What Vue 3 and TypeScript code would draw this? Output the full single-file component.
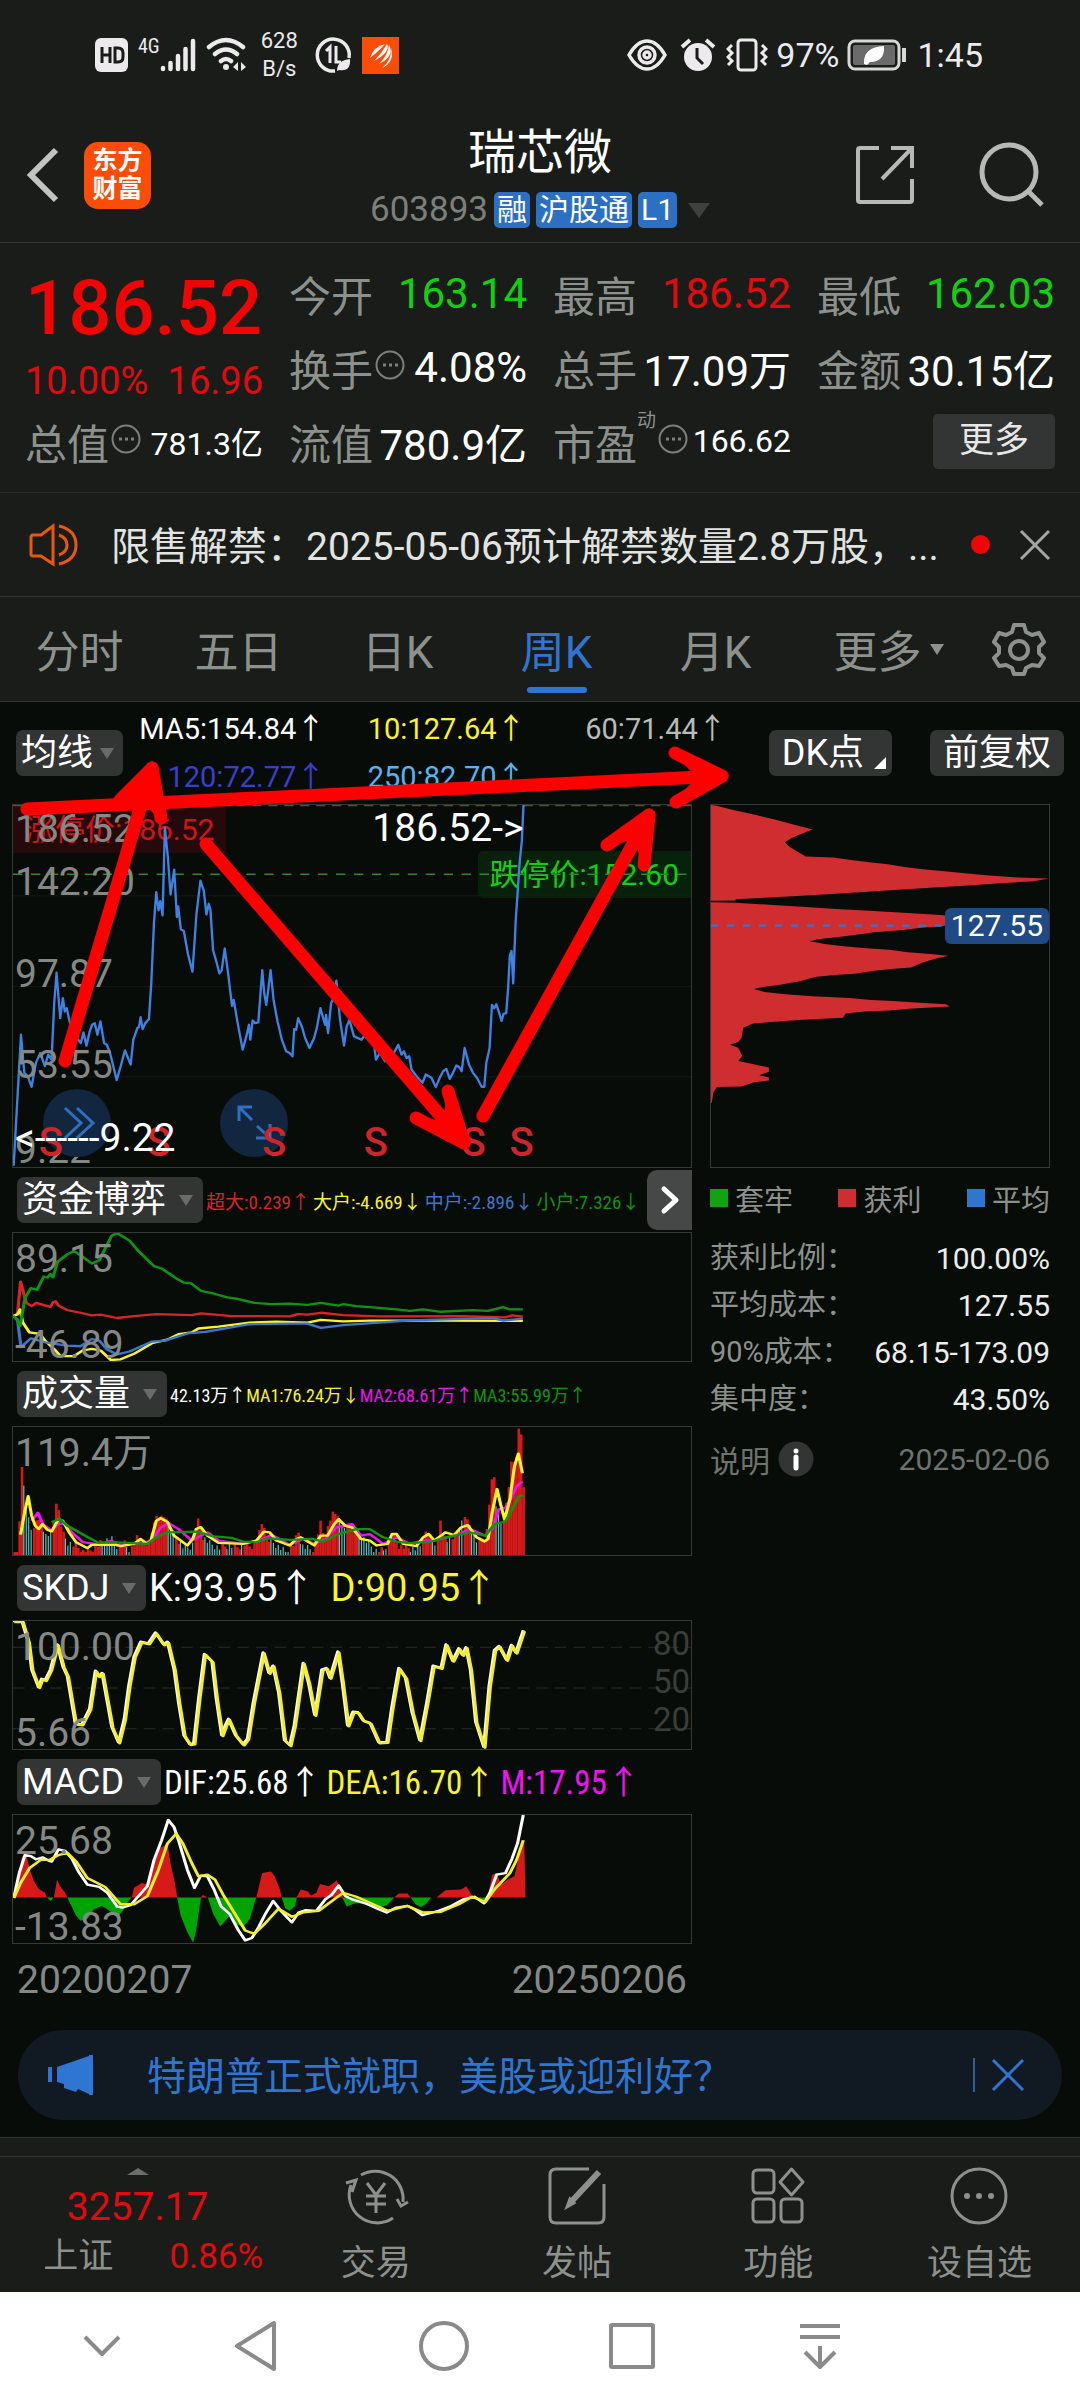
<script setup lang="ts">
import { ref } from 'vue'

type Tone = 'up' | 'down' | 'plain'
interface Reading { text: string; dir: '↑' | '↓'; color: string }

const tabs = ['分时', '五日', '日K', '周K', '月K']
const activeTab = ref('周K')

const averages: Reading[] = [
  { text: 'MA5:154.84', dir: '↑', color: '#ffffff' },
  { text: '10:127.64', dir: '↑', color: '#fbf32c' },
  { text: '60:71.44', dir: '↑', color: '#b9bcb9' },
  { text: '120:72.77', dir: '↑', color: '#3a3fc8' },
  { text: '250:82.70', dir: '↑', color: '#58b4ee' },
]

const fund: Reading[] = [
  { text: '超大:0.239', dir: '↑', color: '#d82424' },
  { text: '大户:-4.669', dir: '↓', color: '#fbf32c' },
  { text: '中户:-2.896', dir: '↓', color: '#3b78cc' },
  { text: '小户:7.326', dir: '↓', color: '#119311' },
]
const volume: Reading[] = [
  { text: '42.13万', dir: '↑', color: '#ffffff' },
  { text: 'MA1:76.24万', dir: '↓', color: '#fbf32c' },
  { text: 'MA2:68.61万', dir: '↑', color: '#f012f0' },
  { text: 'MA3:55.99万', dir: '↑', color: '#119311' },
]
const skdj: Reading[] = [
  { text: 'K:93.95', dir: '↑', color: '#ffffff' },
  { text: 'D:90.95', dir: '↑', color: '#fbf32c' },
]
const macd: Reading[] = [
  { text: 'DIF:25.68', dir: '↑', color: '#ffffff' },
  { text: 'DEA:16.70', dir: '↑', color: '#fbf32c' },
  { text: 'M:17.95', dir: '↑', color: '#f012f0' },
]

const costs = [
  { name: '获利比例：', value: '100.00%' },
  { name: '平均成本：', value: '127.55' },
  { name: '90%成本：', value: '68.15-173.09' },
  { name: '集中度：', value: '43.50%' },
]
const legend = [
  { name: '套牢', color: '#10a510' },
  { name: '获利', color: '#cf2d2f' },
  { name: '平均', color: '#2f76d2' },
]

const sellMarks = [38, 146, 262, 364, 462, 510].map((x) => (x / 680) * 100)
const tone: Record<Tone, string> = { up: 'red', down: 'green', plain: 'white' }

const priceLine =
  '38,1130 48,950 60,735 70,850 80,860 92,892 105,820 118,790 132,830 142,795 152,810 160,640 167,548 178,685 186,625 192,665 198,655 205,690 215,730 228,745 240,760 248,728 257,768 266,728 274,705 282,700 290,735 299,695 310,760 318,765 328,790 348,872 360,830 368,800 373,782 390,825 398,750 410,715 415,712 420,682 426,718 434,700 445,688 452,580 460,400 467,305 474,360 479,332 486,375 493,110 502,200 510,312 521,237 529,380 533,348 541,417 550,422 562,490 576,545 588,370 600,270 610,300 618,372 625,340 630,358 638,480 648,515 657,550 664,540 673,475 682,540 695,648 700,630 712,700 727,780 738,740 746,705 750,750 757,692 764,700 774,698 780,620 786,540 792,610 798,645 804,600 811,540 820,630 832,695 845,750 858,785 868,790 877,800 882,718 888,720 894,685 905,710 915,745 928,775 942,745 950,715 961,655 968,680 975,705 978,675 984,730 993,640 1000,625 1009,572 1020,690 1032,768 1040,710 1048,690 1062,740 1085,750 1095,735 1120,745 1128,810 1140,790 1155,815 1185,785 1195,765 1205,795 1212,785 1220,805 1228,800 1235,840 1250,860 1268,880 1278,855 1295,865 1308,893 1320,865 1330,845 1340,838 1350,868 1360,850 1370,828 1378,832 1386,845 1395,775 1408,825 1420,850 1432,865 1446,892 1454,892 1460,820 1470,775 1477,645 1484,655 1490,643 1496,660 1506,693 1512,672 1520,670 1526,590 1531,495 1536,482 1541,580 1548,400 1560,220 1567,150 1572,42'

const chipShape =
  '63,313 80,315 130,328 205,345 255,357 305,370 368,387 340,398 310,410 285,425 300,440 325,455 348,468 430,471 490,480 540,486 595,492 645,500 700,507 765,513 835,520 900,526 985,532 1080,535 1032,543 932,549 835,556 735,562 635,568 535,575 437,581 337,587 237,592 137,597 137,601 63,602 63,606 137,608 237,614 337,620 440,627 540,632 642,638 740,644 850,652 890,657 830,668 760,678 690,684 640,690 555,697 495,705 440,712 385,718 360,724 405,732 455,738 520,744 600,750 655,757 715,762 778,768 740,776 700,788 665,803 612,807 555,813 495,822 435,826 375,832 330,845 270,855 220,862 192,868 225,877 285,884 368,890 480,895 545,901 610,904 705,910 770,914 782,921 668,927 600,933 525,936 468,942 460,955 340,961 255,967 190,972 160,985 155,1015 145,1028 120,1036 145,1045 157,1070 145,1085 195,1096 237,1105 237,1118 208,1128 237,1135 237,1144 190,1150 155,1162 80,1164 70,1180 65,1212 63,1212'

const fundLines = [
  { color: '#d82424', points: '28,470 38,465 45,365 58,430 70,440 80,430 112,442 118,428 124,425 130,438 150,452 180,460 205,468 225,466 262,476 300,470 350,464 430,467 450,462 520,470 650,471 668,464 690,466 720,460 770,467 850,471 1040,470 1135,474 1150,468 1174,472' },
  { color: '#fbf32c', points: '28,470 38,465 44,450 50,490 65,520 88,524 100,545 120,570 135,592 165,592 185,575 205,570 225,575 248,604 270,602 300,585 340,553 375,542 400,525 430,520 445,508 490,502 560,490 620,487 690,490 720,482 770,486 830,484 950,484 1174,485' },
  { color: '#3b78cc', points: '28,470 38,480 46,565 68,538 100,550 150,560 180,562 205,540 222,545 240,572 262,587 290,578 340,548 370,545 420,523 460,518 560,495 650,493 690,493 720,506 770,498 850,490 920,483 1080,477 1110,477 1130,484 1174,478' },
  { color: '#119311', points: '28,470 36,480 44,500 55,415 68,385 82,390 97,350 106,352 112,342 118,352 128,305 150,282 165,272 180,285 205,310 222,300 235,265 250,225 262,217 290,240 310,272 345,318 362,325 395,355 412,368 428,370 450,393 480,402 510,413 530,417 570,430 610,434 650,432 690,436 720,430 760,438 770,434 800,440 850,445 890,450 920,454 950,450 990,457 1060,452 1095,454 1130,443 1145,450 1174,450' },
]

// Weekly volume, given as the profile of bar tops and sampled once per week.
const volumeProfile: [number, number][] = [
  [30, 550], [38, 535], [44, 275], [50, 330], [56, 400], [62, 440], [70, 490], [80, 440], [90, 470], [100, 490], [115, 480], [121, 388], [128, 420], [135, 480], [150, 510], [170, 525], [190, 545], [210, 525], [230, 505], [248, 500], [260, 520], [275, 512], [290, 540], [300, 498], [315, 500], [330, 520], [345, 438], [370, 440], [380, 470], [395, 500], [412, 530], [430, 520], [440, 440], [450, 490], [470, 515], [490, 528], [510, 520], [530, 525], [545, 515], [560, 525], [575, 500], [587, 450], [595, 500], [610, 510], [640, 540], [655, 520], [668, 478], [675, 520], [700, 535], [717, 452], [725, 500], [744, 427], [758, 435], [770, 480], [780, 450], [800, 480], [820, 505], [840, 535], [860, 535], [878, 485], [890, 520], [920, 530], [940, 530], [955, 475], [970, 510], [980, 510], [986, 448], [992, 500], [1010, 500], [1028, 480], [1040, 435], [1055, 470], [1070, 510], [1090, 485], [1097, 385], [1105, 285], [1112, 400], [1125, 465], [1138, 370], [1148, 240], [1154, 300], [1162, 170], [1168, 185], [1175, 417], [1181, 417],
]
const fallingWeeks: [number, number][] = [
  [49, 68], [92, 112], [140, 160], [225, 264], [280, 292], [372, 388], [400, 436], [455, 492], [505, 520], [540, 546], [605, 650], [672, 700], [755, 772], [800, 845], [855, 866], [915, 945], [968, 980], [1000, 1012], [1028, 1036], [1052, 1072], [1112, 1128],
]
const volumeBars = Array.from({ length: 209 }, (_, i) => {
  const x = 29 + i * 5.5
  const k = Math.max(1, volumeProfile.findIndex(([px]) => px > x))
  const [x0, y0] = volumeProfile[k - 1]
  const [x1, y1] = volumeProfile[k]
  const y = y0 + ((y1 - y0) * Math.max(0, x - x0)) / (x1 - x0)
  const falling = fallingWeeks.some(([a, b]) => x > a && x < b)
  const dip = ((i * 7) % 5) * (y > 480 ? 5 : 2)
  return { x, y: Math.min(y + dip, 550), falling }
})
const volumeLines = [
  { color: '#f012f0', points: '70,455 84,430 95,465 115,485 130,463 145,465 160,490 185,520 220,527 250,515 262,530 320,522 340,515 360,475 378,462 400,480 430,515 465,490 490,515 545,525 580,515 610,498 650,528 680,510 705,525 730,510 755,475 790,465 810,500 830,495 860,525 890,505 920,525 950,515 975,515 1020,500 1055,480 1090,500 1105,480 1120,420 1135,415 1150,380 1160,350 1173,335' },
  { color: '#fbf32c', points: '45,497 54,430 62,380 70,440 78,470 86,480 94,465 105,482 115,487 130,450 140,455 155,492 170,520 195,538 205,528 260,528 270,532 300,525 315,510 328,525 338,515 350,455 360,447 375,458 390,500 420,530 432,510 440,480 450,474 465,500 490,522 545,525 575,515 592,488 605,490 620,515 650,530 665,510 675,505 705,530 720,500 735,500 750,465 760,450 775,470 790,475 810,510 830,515 845,530 870,525 880,495 890,495 905,525 935,532 950,505 962,495 975,515 985,505 1000,490 1020,498 1035,475 1050,468 1070,505 1088,518 1096,510 1105,430 1116,358 1125,410 1133,450 1145,390 1155,290 1164,250 1173,310' },
  { color: '#119311', points: '115,460 132,448 150,470 190,500 220,522 250,520 330,525 350,505 375,490 440,488 480,502 520,507 545,518 575,520 600,508 650,513 700,510 725,518 760,495 800,480 830,480 860,505 890,518 920,523 970,518 1000,505 1055,490 1090,500 1110,465 1135,457 1150,420 1165,380 1174,378' },
]

const skdjLine =
  '28,32 48,32 62,95 70,180 85,233 92,208 100,212 112,180 127,103 140,170 150,200 168,345 182,347 200,300 213,183 220,200 228,190 240,280 250,355 265,402 278,330 288,230 300,140 315,95 332,100 348,67 366,103 375,95 390,180 400,280 412,380 425,407 434,405 445,270 458,132 475,155 485,270 497,380 505,350 512,330 528,380 545,408 555,390 568,280 590,128 603,190 612,168 625,250 638,395 650,410 660,350 680,160 692,220 706,318 722,180 732,175 740,205 758,125 768,220 780,350 792,308 803,310 815,335 830,342 850,402 868,400 880,290 895,175 910,205 925,310 942,395 958,280 972,168 990,175 1001,103 1016,153 1030,115 1038,135 1046,112 1056,180 1068,340 1086,415 1098,230 1110,120 1120,108 1137,150 1148,105 1158,128 1175,60'

const macdRed =
  '30,864 40,800 48,740 58,735 66,780 75,815 85,838 100,850 104,864 120,864 127,810 134,830 145,850 150,864 295,864 300,835 318,820 330,825 345,760 352,715 362,712 375,700 382,760 392,820 397,864 450,864 455,857 465,864 575,864 588,790 608,785 616,800 628,840 632,864 665,864 675,840 690,845 698,858 710,850 718,823 738,830 756,812 765,845 770,864 885,864 895,852 915,852 922,864 980,864 1000,842 1035,840 1047,830 1060,860 1064,864 1095,864 1105,795 1115,790 1125,825 1140,810 1155,800 1165,740 1177,688 1180,864'
const macdGreen =
  '104,864 113,875 119,864 150,864 170,920 180,935 195,930 210,900 228,890 245,905 262,925 275,905 290,870 295,864 397,864 405,920 420,970 433,1002 440,960 450,870 452,864 466,864 478,915 494,953 515,920 530,945 545,955 560,930 572,875 575,864 632,864 640,898 650,905 662,890 666,864 768,864 778,892 800,880 815,885 850,895 868,888 885,864 922,864 933,885 945,893 955,885 968,864 1065,864 1085,880 1098,864'
const difLine =
  '30,864 42,790 55,735 68,738 80,748 95,742 108,752 115,755 130,718 145,722 160,745 175,785 195,825 222,832 240,850 262,892 275,895 292,888 305,868 330,830 345,750 362,690 377,628 390,650 400,690 420,780 436,835 450,798 465,800 480,840 495,890 515,915 535,965 550,995 565,988 580,955 595,915 613,875 630,905 655,940 670,910 685,903 710,905 730,870 745,855 760,828 775,860 790,870 820,882 850,900 868,910 890,895 915,890 930,900 948,918 985,905 1010,892 1040,870 1065,862 1087,882 1100,850 1115,795 1135,790 1150,745 1162,700 1175,613'
const deaLine =
  '30,866 45,820 65,775 90,750 110,750 130,735 150,728 170,755 195,805 235,832 270,885 300,885 330,860 355,780 375,700 395,670 410,700 430,760 445,800 465,795 482,810 500,855 525,910 550,965 570,975 590,950 625,898 655,923 680,910 715,905 740,880 770,850 800,862 830,880 870,905 915,890 950,910 990,908 1030,885 1060,862 1090,878 1110,840 1145,790 1160,750 1175,690'

const strokes = [
  { shaft: '27,809 722,776', head: '675,753 722,776 676,802', fill: '675,753 722,776 676,802 700,777' },
  { shaft: '65,1061 152,768', head: '120,800 152,768 161,818', fill: '120,800 152,768 161,818 143,800' },
  { shaft: '206,844 464,1143', head: '416,1118 464,1143 448,1091', fill: '416,1118 464,1143 448,1091 446,1124' },
  { shaft: '483,1116 649,815', head: '607,845 649,815 644,865', fill: '607,845 649,815 644,865 636,836' },
]
</script>

<template>
  <div class="app">
    <div class="status">
      <div class="status-side">
        <svg width="33" height="34" viewBox="0 0 33 34"><rect width="33" height="34" rx="6" fill="#eceaec" /><path d="M7 9v16M15 9v16M7 17h8M20 10v14h3q5 0 5-5v-4q0-5-5-5z" fill="none" stroke="#191c18" stroke-width="3" /></svg>
        <span class="net">4G</span>
        <svg class="signal" width="36" height="34" viewBox="0 0 36 34" stroke="#eceaec" stroke-width="4.5" stroke-linecap="round"><path d="M3 30v1M10.500 25v6M18 18v13M25.500 11v20M33 3v28" /></svg>
        <svg class="wifi" width="42" height="36" viewBox="0 0 42 36" fill="none" stroke="#eceaec" stroke-width="4.500" stroke-linecap="round"><path d="M3 10Q20-4 37 10M9 17q11-9 22 0M15 24q5-4 10 0" /><circle cx="20" cy="30" r="3" fill="#eceaec" stroke="none" /><path d="M27 30l5-5v9zM40 30l-5-5v9z" fill="#eceaec" stroke="none" /></svg>
        <span class="speed">628<br />B/s</span>
        <svg class="saver" width="38" height="38" viewBox="0 0 38 38" fill="none" stroke="#eceaec" stroke-width="3.500"><path d="M20 35A16 16 0 1 1 34 22" /><path d="M11 15l4-4v16M21 10v16h5" stroke-width="3" /><path d="M22 35q0-11 13-12 1 13-11 11z" fill="#eceaec" stroke="none" /></svg>
        <svg width="37" height="37" viewBox="0 0 37 37"><rect width="37" height="37" fill="#fb4d08" /><path d="M8 21Q12 9 23 7q-4 5-15 14zM12 24Q20 16 25 7q4 8-13 17zM17 27Q26 18 27 8q6 11-10 19zM20 31q10-8 9-20 4 14-9 20z" fill="#fff" /></svg>
      </div>
      <div class="status-side end">
        <svg width="40" height="32" viewBox="0 0 40 32" fill="none" stroke="#eceaec" stroke-width="3.500"><path d="M2 16Q10 2 20 2t18 14Q30 30 20 30T2 16z" /><circle cx="20" cy="16" r="8" /><circle cx="20" cy="16" r="3" /></svg>
        <svg class="alarm" width="36" height="34" viewBox="0 0 36 34"><circle cx="18" cy="19" r="14" fill="#eceaec" /><path d="M2 9l8-7M34 9l-8-7" stroke="#eceaec" stroke-width="4" /><path d="M17 10v10l6 6" fill="none" stroke="#191c18" stroke-width="3" /></svg>
        <svg class="vibrate" width="42" height="34" viewBox="0 0 42 34" fill="none" stroke="#eceaec" stroke-width="3"><rect x="12" y="2" width="18" height="30" rx="3" /><path d="M6 7L2 11l4 4-4 4 4 4-4 4M36 7l4 4-4 4 4 4-4 4 4 4" /></svg>
        <span class="clock">97%</span>
        <svg class="battery" width="60" height="32" viewBox="0 0 60 32"><rect x="2" y="2" width="50" height="28" rx="6" fill="none" stroke="#d8d8d8" stroke-width="3" /><rect x="6" y="6" width="42" height="20" rx="2" fill="#6b6b6b" /><path d="M57 9v14" stroke="#d8d8d8" stroke-width="4" /><path d="M17 25Q16 8 37 7q1 16-14 16l-3 3z" fill="#fff" /></svg>
        <span class="clock">1:45</span>
      </div>
    </div>

    <header class="header">
      <div class="header-side">
        <button class="bare" aria-label="返回"><svg width="34" height="56" viewBox="0 0 34 56" fill="none" stroke="#c2c4c2" stroke-width="6"><path d="M30 3L5 28l25 25" /></svg></button>
        <span class="logo">东方<br />财富</span>
      </div>
      <div class="title">
        <h1>瑞芯微</h1>
        <div class="code">603893<span class="tag">融</span><span class="tag">沪股通</span><span class="tag">L1</span><i class="tri big"></i></div>
      </div>
      <div class="header-side end">
        <button class="bare" aria-label="分享"><svg width="60" height="60" viewBox="0 0 60 60" fill="none" stroke="#b6b9b6" stroke-width="4"><path d="M24 3H5q-2 0-2 2v50q0 2 2 2h50q2 0 2-2V34M36 3h21v20M57 3L27 34" /></svg></button>
        <button class="bare search" aria-label="搜索"><svg width="66" height="66" viewBox="0 0 66 66" fill="none" stroke="#b6b9b6" stroke-width="5"><circle cx="30" cy="30" r="27" /><path d="M49 49l14 14" /></svg></button>
      </div>
    </header>

    <section class="quote">
      <div class="price-cell">
        <strong>186.52</strong>
        <div class="change"><span>10.00%</span><span>16.96</span></div>
      </div>
      <div class="cell"><span>今开</span><b :class="tone.down">163.14</b></div>
      <div class="cell"><span>最高</span><b :class="tone.up">186.52</b></div>
      <div class="cell"><span>最低</span><b :class="tone.down">162.03</b></div>
      <div class="cell"><span>换手<svg class="dots" viewBox="0 0 30 30"><circle cx="15" cy="15" r="13.500" fill="none" stroke="#7c807c" stroke-width="2" /><path d="M8 15h3M14 15h3M20 15h3" stroke="#7c807c" stroke-width="3" /></svg></span><b :class="tone.plain">4.08%</b></div>
      <div class="cell"><span>总手</span><b :class="tone.plain">17.09万</b></div>
      <div class="cell"><span>金额</span><b :class="tone.plain">30.15亿</b></div>
      <div class="cell"><span>总值<svg class="dots" viewBox="0 0 30 30"><circle cx="15" cy="15" r="13.500" fill="none" stroke="#7c807c" stroke-width="2" /><path d="M8 15h3M14 15h3M20 15h3" stroke="#7c807c" stroke-width="3" /></svg></span><b class="white small">781.3亿</b></div>
      <div class="cell"><span>流值</span><b :class="tone.plain">780.9亿</b></div>
      <div class="cell"><span>市盈<sup>动</sup><svg class="dots" viewBox="0 0 30 30"><circle cx="15" cy="15" r="13.500" fill="none" stroke="#7c807c" stroke-width="2" /><path d="M8 15h3M14 15h3M20 15h3" stroke="#7c807c" stroke-width="3" /></svg></span><b class="white small">166.62</b></div>
      <div class="cell right"><button class="more">更多</button></div>
    </section>

    <section class="notice">
      <svg width="52" height="44" viewBox="0 0 52 44" fill="none" stroke="#e8590c" stroke-width="3"><path d="M24 3v38L12 33H4q-2 0-2-2V14q0-2 2-2h8zM30 3q17 4 17 19T30 41M30 12q8 3 8 10t-8 10" /></svg>
      <p>限售解禁：2025-05-06预计解禁数量2.8万股，...</p>
      <i class="dot"></i>
      <button class="bare" aria-label="关闭"><svg width="32" height="32" viewBox="0 0 32 32" stroke="#a3a6a3" stroke-width="3"><path d="M2 2l28 28M30 2L2 30" /></svg></button>
    </section>

    <nav class="tabs">
      <button v-for="t in tabs" :key="t" :class="{ on: t === activeTab }" @click="activeTab = t">{{ t }}</button>
      <button>更多<i class="tri tab"></i></button>
      <button aria-label="设置"><svg width="54" height="54" viewBox="0 0 54 54" fill="none" stroke="#8d918d" stroke-width="4" stroke-linejoin="round"><path d="M22 3h10l2 7 6 3 7-2 5 9-5 5v6l5 5-5 8-7-1-6 3-2 6H22l-2-6-6-3-7 1-5-8 5-5v-6l-5-5 5-9 7 2 6-3z" /><circle cx="27" cy="28" r="9" /></svg></button>
    </nav>

    <main class="charts">
      <div class="toolbar">
        <span class="picker tight"><select aria-label="均线"><option>均线</option></select><i class="tri"></i></span>
        <div class="averages">
          <span v-for="a in averages" :key="a.text" :style="{ color: a.color }">{{ a.text }}<i class="arrow">{{ a.dir }}</i></span>
        </div>
        <button class="chip dk">DK点<i class="corner"></i></button>
        <button class="chip">前复权</button>
      </div>

      <div class="columns">
        <div class="left">
          <div class="plot main">
            <svg viewBox="36 42 2040 1092" preserveAspectRatio="none">
              <path d="M36 316H2076M36 590H2076M36 862H2076" stroke="#1c211d" stroke-width="2" />
              <path d="M36 251H2076" stroke="#2a8a2a" stroke-width="5" stroke-dasharray="28 26" />
              <path d="M36 44H2076" stroke="#8d3434" stroke-width="4" stroke-dasharray="28 20" />
              <polyline :points="priceLine" fill="none" stroke="#3f82e4" stroke-width="7" stroke-linejoin="round" />
            </svg>
            <span class="limit up">涨停价:186.52</span>
            <span class="limit down">跌停价:152.60</span>
            <span class="scale s1">186.52</span>
            <span class="scale s2">142.20</span>
            <span class="scale s3">97.87</span>
            <span class="scale s4">53.55</span>
            <span class="scale s5">9.22</span>
            <span class="peak">186.52-&gt;</span>
            <button class="round r1" aria-label="快进"><svg width="68" height="68" viewBox="0 0 68 68" fill="none" stroke="#2e6fc0" stroke-width="3"><path d="M22 19l16 15-16 15M34 19l16 15-16 15" /></svg></button>
            <button class="round r2" aria-label="全屏"><svg width="68" height="68" viewBox="0 0 68 68" fill="none" stroke="#2e6fc0" stroke-width="3"><path d="M32 18H19v14M19 18l13 13M36 49h14V35M50 49L37 37" /></svg></button>
            <span v-for="m in sellMarks" :key="m" class="sell" :style="{ left: m + '%' }">S</span>
            <span class="trough">&lt;------9.22</span>
          </div>

          <div class="row">
            <span class="picker"><select aria-label="指标一"><option>资金博弈</option></select><i class="tri"></i></span>
            <div class="readings narrow"><span v-for="r in fund" :key="r.text" :style="{ color: r.color }">{{ r.text }}<i class="arrow">{{ r.dir }}</i></span></div>
            <button class="next" aria-label="下一页"><svg width="20" height="30" viewBox="0 0 20 30" fill="none" stroke="#fff" stroke-width="5" stroke-linecap="round" stroke-linejoin="round"><path d="M4 4l12 11L4 26" /></svg></button>
          </div>
          <div class="plot">
            <svg viewBox="28 217 1524 390" preserveAspectRatio="none">
              <polyline v-for="l in fundLines" :key="l.color" :points="l.points" fill="none" :stroke="l.color" stroke-width="7" stroke-linejoin="round" />
            </svg>
            <span class="scale max">89.15</span>
            <span class="scale min">-46.89</span>
          </div>

          <div class="row">
            <span class="picker"><select aria-label="指标二"><option>成交量</option></select><i class="tri"></i></span>
            <div class="readings narrow dense"><span v-for="r in volume" :key="r.text" :style="{ color: r.color }">{{ r.text }}<i class="arrow">{{ r.dir }}</i></span></div>
          </div>
          <div class="plot">
            <span class="scale max">119.4万</span>
            <svg viewBox="28 169 1524 390" preserveAspectRatio="none">
              <rect v-for="b in volumeBars" :key="b.x" :x="b.x" :y="b.y" :width="b.falling ? 2.6 : 5.7" :height="559 - b.y" :fill="b.falling ? '#58c8c8' : '#d61a1a'" />
              <polyline v-for="l in volumeLines" :key="l.color" :points="l.points" fill="none" :stroke="l.color" stroke-width="7" stroke-linejoin="round" />
            </svg>
          </div>

          <div class="row">
            <span class="picker"><select aria-label="指标三"><option>SKDJ</option></select><i class="tri"></i></span>
            <div class="readings wide"><span v-for="r in skdj" :key="r.text" :style="{ color: r.color }">{{ r.text }}<i class="arrow">{{ r.dir }}</i></span></div>
          </div>
          <div class="plot">
            <svg viewBox="28 32 1524 390" preserveAspectRatio="none">
              <path d="M28 112H1552M28 236H1552M28 360H1552" stroke="#262b27" stroke-width="3" stroke-dasharray="26 16" />
              <polyline :points="skdjLine" fill="none" stroke="#fff" stroke-width="7" stroke-linejoin="round" />
              <polyline :points="skdjLine" transform="translate(3 3)" fill="none" stroke="#f4ee2a" stroke-width="7" stroke-linejoin="round" />
            </svg>
            <span class="scale max">100.00</span>
            <span class="scale min">5.66</span>
            <div class="levels"><span>80</span><span>50</span><span>20</span></div>
          </div>

          <div class="row">
            <span class="picker"><select aria-label="指标四"><option>MACD</option></select><i class="tri"></i></span>
            <div class="readings mid"><span v-for="r in macd" :key="r.text" :style="{ color: r.color }">{{ r.text }}<i class="arrow">{{ r.dir }}</i></span></div>
          </div>
          <div class="plot">
            <svg viewBox="28 613 1524 390" preserveAspectRatio="none">
              <polygon :points="macdRed" fill="#d61a1a" />
              <polygon :points="macdGreen" fill="#00a400" />
              <polyline :points="difLine" fill="none" stroke="#fff" stroke-width="7" stroke-linejoin="round" />
              <polyline :points="deaLine" fill="none" stroke="#f4ee2a" stroke-width="7" stroke-linejoin="round" />
            </svg>
            <span class="scale max">25.68</span>
            <span class="scale min">-13.83</span>
          </div>
          <div class="dates"><span>20200207</span><span>20250206</span></div>
        </div>

        <aside class="right">
          <div class="plot main">
            <svg viewBox="63 313 1017 1092" preserveAspectRatio="none">
              <polygon :points="chipShape" fill="#cf2d2f" />
              <path d="M63 677H765" stroke="#2f76d2" stroke-width="7" stroke-dasharray="22 26" />
            </svg>
            <span class="avg">127.55</span>
          </div>
          <div class="legend"><span v-for="l in legend" :key="l.name"><i :style="{ background: l.color }"></i>{{ l.name }}</span></div>
          <dl>
            <div v-for="c in costs" :key="c.name"><dt>{{ c.name }}</dt><dd>{{ c.value }}</dd></div>
          </dl>
          <div class="explain">
            <span>说明<svg width="36" height="36" viewBox="0 0 36 36"><circle cx="18" cy="18" r="17.500" fill="#333534" /><circle cx="18" cy="10" r="2.500" fill="#fff" /><path d="M18 16v11" stroke="#fff" stroke-width="5" stroke-linecap="round" /></svg></span>
            <span>2025-02-06</span>
          </div>
        </aside>
      </div>

      <svg class="ink" viewBox="0 702 1080 480" preserveAspectRatio="none">
        <g v-for="s in strokes" :key="s.shaft" stroke="#fd0100" stroke-width="13" stroke-linecap="round" stroke-linejoin="round">
          <polyline :points="s.shaft" fill="none" />
          <polyline :points="s.head" fill="none" />
          <polygon :points="s.fill" fill="#fd0100" stroke-width="4" />
        </g>
      </svg>

      <div class="banner">
        <svg width="46" height="40" viewBox="0 0 46 40" fill="#2f76d2"><path d="M0 12h4v15H0zM9 12L41 1v38L30 34l-2 3-12-4v-4l-7-2z" /><path d="M41 0h4v40h-4z" /></svg>
        <a href="#">特朗普正式就职，美股或迎利好？</a>
        <button class="bare" aria-label="关闭"><svg width="34" height="34" viewBox="0 0 34 34" stroke="#2f76d2" stroke-width="3"><path d="M2 2l30 30M32 2L2 32" /></svg></button>
      </div>
    </main>

    <div class="strip"></div>
    <footer class="actions">
      <div class="index">
        <i class="tri upward"></i>
        <span class="point">3257.17</span>
        <div><span>上证</span><span class="pct">0.86%</span></div>
      </div>
      <button>
        <svg width="66" height="60" viewBox="0 0 66 60" fill="none" stroke="#8d918d" stroke-width="3"><path d="M18 9A28 28 0 0 1 60 36M3 17l10-3-4 12M8 19A28 28 0 0 0 50 52M54 33l4 7 7-4" /><path d="M24 17l9 12 9-12M23 30h20M23 38h20M33 29v18" /></svg>
        交易
      </button>
      <button>
        <svg width="60" height="60" viewBox="0 0 60 60" fill="none" stroke="#8d918d" stroke-width="3"><path d="M42 3H9Q3 3 3 9v42q0 6 6 6h42q6 0 6-6V18" /><path d="M24 36L52 6" stroke-width="6" /><path d="M20 41l3-8 4 4z" fill="#8d918d" /></svg>
        发帖
      </button>
      <button>
        <svg width="56" height="60" viewBox="0 0 56 60" fill="none" stroke="#8d918d" stroke-width="3"><rect x="3" y="4" width="21" height="23" rx="4" /><rect x="3" y="33" width="21" height="23" rx="4" /><rect x="31" y="33" width="21" height="23" rx="4" /><path d="M41.500 3L53 16 41.500 29 30 16z" stroke-linejoin="round" /></svg>
        功能
      </button>
      <button>
        <svg width="60" height="60" viewBox="0 0 60 60"><circle cx="30" cy="30" r="27" fill="none" stroke="#8d918d" stroke-width="3" /><circle cx="18" cy="30" r="3" fill="#8d918d" /><circle cx="30" cy="30" r="3" fill="#8d918d" /><circle cx="42" cy="30" r="3" fill="#8d918d" /></svg>
        设自选
      </button>
    </footer>

    <nav class="system">
      <button aria-label="收起"><svg width="40" height="26" viewBox="0 0 40 26"><path d="M3 4l17 17L37 4" /></svg></button>
      <button aria-label="后退"><svg width="44" height="52" viewBox="0 0 44 52"><path d="M40 3v46L3 26z" /></svg></button>
      <button aria-label="主页"><svg width="52" height="52" viewBox="0 0 52 52"><circle cx="26" cy="26" r="23" /></svg></button>
      <button aria-label="多任务"><svg width="46" height="48" viewBox="0 0 46 48"><rect x="2" y="3" width="42" height="42" rx="1" /></svg></button>
      <button aria-label="通知"><svg width="42" height="48" viewBox="0 0 42 48"><path d="M1 4h40M1 15h40M21 24v20M6 30l15 15 15-15" /></svg></button>
    </nav>
  </div>
</template>

<style>
body { background: #fff; }
</style>

<style scoped>
.app { width: 100%; background: #191c18; color: #8d918d; font-family: Roboto, "Noto Sans CJK SC", sans-serif; }
* { box-sizing: border-box; }
button, select { font: inherit; color: inherit; border: 0; padding: 0; background: none; }
i { font-style: normal; }
svg { display: block; flex: none; }

.status { height: 110px; display: flex; justify-content: space-between; align-items: center; padding: 0 97px 0 95px; color: #eceaec; }
.status-side { display: flex; align-items: center; }
.net { font-family: "Roboto Condensed", Roboto, sans-serif; font-size: 20px; line-height: 20px; margin: 0 0 18px 10px; }
.wifi { margin: 0 13px 0 10px; }
.speed { font-size: 22px; line-height: 28px; text-align: center; }
.saver { margin: 0 9px 0 17px; }
.alarm { margin: 0 10px 0 13px; }
.vibrate { margin-right: 8px; }
.battery { margin: 0 10px 0 8px; }
.clock { font-size: 34px; line-height: 40px; }

.header { height: 133px; display: grid; grid-template-columns: 1fr auto 1fr; border-bottom: 1px solid #323632; }
.header-side { display: flex; align-items: center; padding: 0 0 2px 26px; }
.header-side.end { justify-content: flex-end; padding: 0 35px 2px 0; }
.search { margin-left: 64px; }
.logo { margin-left: 24px; width: 67px; height: 67px; border-radius: 14px; background: #fb4d08; color: #fff; font-size: 25px; line-height: 28px; font-weight: 700; text-align: center; padding-top: 5px; }
.title { text-align: center; padding-top: 12px; }
h1 { margin: 0; font-size: 48px; line-height: 62px; font-weight: 400; color: #fff; }
.code { display: flex; align-items: center; justify-content: center; font-size: 35px; line-height: 52px; color: #7c807c; }
.tag { margin-left: 6px; height: 36px; line-height: 35px; padding: 0 3px; border-radius: 5px; background: #2c70c4; color: #fff; font-size: 30px; }
.tri { display: inline-block; border: 7px solid transparent; border-top: 11px solid #686b68; border-bottom: 0; }
.tri.big { border-width: 15px 11px 0; border-top-color: #3e413e; margin-left: 11px; }
.tri.tab { border-top-color: #8d918d; margin-left: 8px; }

.quote { display: grid; grid-template-columns: repeat(4, 1fr); grid-auto-rows: 74px; column-gap: 26px; padding: 13px 25px 14px; border-bottom: 1px solid #2b2f2b; }
.price-cell { grid-row: span 2; color: #f00505; }
.price-cell strong { display: block; font-size: 76px; line-height: 104px; font-weight: 500; }
.change { display: flex; justify-content: space-between; font-size: 38px; line-height: 42px; color: #e00a10; }
.cell { display: flex; align-items: center; justify-content: space-between; font-size: 42px; white-space: nowrap; }
.cell.right { justify-content: flex-end; }
.cell span { display: flex; align-items: center; }
.cell b { font-weight: 400; }
.cell b.small { font-size: 32px; }
.cell sup { font-size: 19px; line-height: 20px; align-self: flex-start; }
.dots { width: 30px; height: 30px; margin: 0 0 4px 2px; }
.red { color: #e00a10; }
.green { color: #10d010; }
.white { color: #fff; }
.more { width: 122px; height: 55px; border-radius: 5px; background: #333434; color: #e8e8e8; font-size: 35px; line-height: 52px; }

.notice { height: 104px; display: flex; align-items: center; padding: 0 29px; border-bottom: 1px solid #323632; }
.notice p { flex: 1; margin: 0 0 3px 30px; font-size: 39px; color: #e2e4e2; white-space: nowrap; }
.dot { width: 19px; height: 19px; border-radius: 50%; background: #f00505; margin-right: 29px; }

.tabs { height: 105px; display: grid; grid-template-columns: 159fr 159fr 159fr 159fr 159fr 187fr 73fr; padding-right: 25px; border-bottom: 1px solid #323632; }
.tabs button { position: relative; display: flex; align-items: center; justify-content: center; font-size: 44px; }
.tabs .on { color: #2f76d2; }
.tabs .on::after { content: ""; position: absolute; bottom: 8px; left: 50%; width: 60px; height: 6px; margin-left: -30px; border-radius: 3px; background: #2f76d2; }

.charts { position: relative; background: #070c08; padding-bottom: 17px; }
.toolbar { height: 102px; display: flex; align-items: center; padding: 0 16px; }
.picker { position: relative; display: inline-flex; align-items: center; flex: none; }
.picker select { appearance: none; height: 46px; padding: 0 36px 0 5px; border-radius: 7px; background: #333434; color: #fff; font-size: 36px; line-height: 46px; }
.picker .tri { position: absolute; right: 10px; pointer-events: none; }
.picker.tight select { padding-right: 29px; }
.picker.tight .tri { right: 9px; }
.arrow { font-family: "Noto Sans CJK SC", sans-serif; line-height: 1; }
.averages { flex: 1; display: grid; grid-template-columns: 201fr 199fr 200fr; padding-right: 42px; font-size: 29px; line-height: 48px; white-space: nowrap; text-align: right; }
.chip { height: 46px; border-radius: 7px; background: #333434; color: #fff; font-size: 36px; padding: 0 13px; line-height: 46px; }
.dk { display: flex; margin-right: 38px; padding-right: 6px; }
.corner { align-self: flex-end; margin: 0 0 7px 10px; border-left: 12px solid transparent; border-bottom: 12px solid #fff; }

.columns { display: grid; grid-template-columns: 2fr 1fr; column-gap: 18px; padding: 0 30px 0 12px; }
.plot { position: relative; height: 130px; border: 1px solid #353a36; }
.plot.main { height: 364px; }
.plot > svg { width: 100%; height: 100%; }
.scale { position: absolute; left: 2px; font-size: 39px; line-height: 40px; color: #868886; }
.s1 { top: 4px; }
.s2 { top: 57px; }
.s3 { top: 149px; }
.s4 { top: 240px; }
.s5 { bottom: -3px; }
.max { top: 6px; }
.min { bottom: -4px; }
.limit { position: absolute; padding: 0 12px; font-size: 30px; line-height: 47px; z-index: 0; }
.limit.up { left: 0; top: 1px; color: #d0141c; background: #260a0b; }
.limit.down { right: 0; top: 46px; color: #10d010; background: #07210a; border-radius: 5px 0 0 5px; }
.plot.main > svg { position: relative; z-index: 1; }
.plot.main > .scale, .peak, .sell, .trough, .round, .avg { z-index: 2; }
.peak { position: absolute; left: 53%; top: 3px; font-size: 39px; line-height: 40px; color: #fff; }
.trough { position: absolute; left: 2px; bottom: 9px; font-size: 39px; line-height: 40px; color: #fff; }
.sell { position: absolute; bottom: 4px; width: 26px; margin-left: -13px; text-align: center; font-size: 40px; line-height: 40px; font-weight: 500; color: #d0232a; }
.round { position: absolute; top: 284px; width: 68px; height: 68px; margin-left: -34px; border-radius: 50%; background: #13263f; }
.r1 { left: 9.5%; }
.r2 { left: 35.5%; }

.row { height: 64px; display: flex; align-items: center; padding-left: 5px; }
.readings { flex: 1; display: flex; white-space: nowrap; margin-left: 3px; }
.narrow { gap: 3px; font-family: "Roboto Condensed", Roboto, "Noto Sans CJK SC", sans-serif; font-size: 19px; }
.dense { gap: 0; font-size: 18px; }
.wide { font-size: 38px; gap: 15px; }
.mid { gap: 5px; font-family: "Roboto Condensed", Roboto, sans-serif; font-size: 33px; }
.next { width: 45px; height: 60px; border-radius: 10px 0 0 10px; background: #454846; display: flex; align-items: center; justify-content: center; }
.levels { position: absolute; right: 1px; top: 4px; display: flex; flex-direction: column; font-size: 33px; line-height: 38px; color: #3a3e3b; }
.dates { display: flex; justify-content: space-between; padding: 0 5px; height: 86px; font-size: 39px; line-height: 73px; color: #868886; }

.avg { position: absolute; right: 0; top: 103px; height: 36px; padding: 0 6px; border-radius: 6px; background: #1f4a86; color: #fff; font-size: 30px; line-height: 36px; }
.legend { display: flex; justify-content: space-between; height: 60px; align-items: center; font-size: 29px; }
.legend span { display: flex; align-items: center; gap: 7px; }
.legend i { width: 18px; height: 18px; }
dl { margin: 7px 0 0; font-size: 30px; line-height: 47px; }
dl div { display: flex; justify-content: space-between; white-space: nowrap; }
dt { font-size: 29px; }
dd { margin: 0; color: #eceeec; }
.explain { display: flex; justify-content: space-between; align-items: center; height: 72px; font-size: 30px; color: #6f736f; }
.explain span { display: flex; align-items: center; gap: 8px; }

.ink { position: absolute; left: 0; top: 0; width: 100%; height: 480px; pointer-events: none; z-index: 3; }

.banner { height: 90px; margin: 0 18px; border-radius: 45px; background: #111a23; display: flex; align-items: center; padding: 0 37px 0 30px; }
.banner a { flex: 1; margin: 0 0 4px 53px; font-size: 39px; color: #2f76d2; text-decoration: none; }
.banner button { border-left: 2px solid #2f5f9f; padding-left: 16px; }

.strip { height: 19px; border-top: 1px solid #323632; }
.actions { height: 136px; display: grid; grid-template-columns: 275fr 201fr 201fr 201fr 201fr; border-top: 1px solid #323632; }
.actions button { display: flex; flex-direction: column; align-items: center; padding-top: 9px; gap: 13px; font-size: 35px; line-height: 50px; }
.index { display: flex; flex-direction: column; align-items: center; padding-top: 11px; line-height: 50px; }
.index div { align-self: flex-end; display: flex; gap: 56px; margin-right: 12px; font-size: 35px; }
.upward { border-width: 0 11px 7px; border-color: transparent transparent #6b6e6b; border-style: solid; margin-bottom: 7px; }
.point { font-size: 39px; color: #e00a10; }
.pct { color: #e00a10; }

.system { height: 108px; background: #fff; display: grid; grid-template-columns: 120fr 188fr 188fr 188fr 188fr 166fr; padding-left: 42px; }
.system button { display: flex; align-items: center; justify-content: center; }
.system svg { fill: none; stroke: #8a8a8a; stroke-width: 4; stroke-linejoin: round; }
</style>
